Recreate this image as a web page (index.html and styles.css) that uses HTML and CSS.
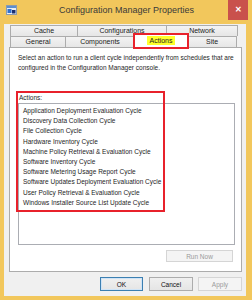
FILE: index.html
```html
<!DOCTYPE html>
<html lang="en">
<head>
  <meta charset="UTF-8">
  <meta name="viewport" content="width=device-width, initial-scale=1.0">
  <title>Configuration Manager Properties</title>
  <link rel="stylesheet" href="styles.css">
</head>
<body>
  <div class="window">
    <div class="titlebar">
      <svg class="app-icon" width="11" height="10" viewBox="0 0 11 10">
        <rect x="0.5" y="0.5" width="10" height="9" fill="#e8eef5" stroke="#8a9bb0"/>
        <rect x="1" y="1" width="9" height="2" fill="#5b8fd0"/>
        <rect x="1.5" y="4" width="4" height="4" fill="#2f6fcf"/>
        <rect x="6" y="5" width="3.5" height="3.5" fill="#1a2f70"/>
      </svg>
      <div class="title">Configuration Manager Properties</div>
      <div class="close">&#x2715;</div>
    </div>

    <div class="dialog">
      <div class="tabs">
        <div class="tabrow">
          <div class="tab w68">Cache</div>
          <div class="tab w90">Configurations</div>
          <div class="tab w72">Network</div>
        </div>
        <div class="tabrow">
          <div class="tab w56">General</div>
          <div class="tab w70">Components</div>
          <div class="tab w54 selected"><span class="marker">Actions</span></div>
          <div class="tab w50">Site</div>
        </div>
      </div>

      <div class="panel">
        <p class="desc">Select an action to run a client cycle independently from schedules that are<br>configured in the Configuration Manager console.</p>

        <div class="label">Actions:</div>
        <ul class="list">
          <li>Application Deployment Evaluation Cycle</li>
          <li>Discovery Data Collection Cycle</li>
          <li>File Collection Cycle</li>
          <li>Hardware Inventory Cycle</li>
          <li>Machine Policy Retrieval &amp; Evaluation Cycle</li>
          <li>Software Inventory Cycle</li>
          <li>Software Metering Usage Report Cycle</li>
          <li>Software Updates Deployment Evaluation Cycle</li>
          <li>User Policy Retrieval &amp; Evaluation Cycle</li>
          <li>Windows Installer Source List Update Cycle</li>
        </ul>

        <button class="btn run" disabled>Run Now</button>

        <!-- annotation drawn over the screenshot -->
        <div class="callout"></div>
      </div>

      <div class="buttons">
        <button class="btn default">OK</button>
        <button class="btn">Cancel</button>
        <button class="btn" disabled>Apply</button>
      </div>
    </div>
  </div>
</body>
</html>
```

FILE: styles.css
```css
body {
  margin: 0;
  font-family: "Liberation Sans", Arial, sans-serif;
  color: #000;
}

.window {
  width: 252px;
  height: 300px;
  box-sizing: border-box;
  padding: 0 6px 4px 4px;
  background: #f2c75c;
  display: flex;
  flex-direction: column;
}

.titlebar {
  height: 24px;
  display: flex;
  align-items: flex-start;
}
.app-icon {
  margin: 5px 0 0 2px;
}
.title {
  flex: 1;
  text-align: center;
  padding-left: 8px;
  font-size: 9px;
  line-height: 20px;
  color: #3a3a3a;
}
.close {
  width: 20px;
  height: 20px;
  margin-right: -2px;
  background: #c9514c;
  color: #fff;
  font-size: 8px;
  font-weight: bold;
  line-height: 20px;
  text-align: center;
}

.dialog {
  flex: 1;
  background: #f0f0f0;
  padding: 1px 4px 5px 5px;
  display: flex;
  flex-direction: column;
}

.tabs {
  margin: 0 2px 0 1px;
}
.tabrow {
  display: flex;
  height: 11px;
}
.tab {
  box-sizing: border-box;
  height: 11px;
  border: 1px solid #acacac;
  border-bottom: none;
  margin-left: -1px;
  background: linear-gradient(#f3f3f3, #e6e6e6);
  font-size: 7px;
  line-height: 10px;
  text-align: center;
  color: #222;
}
.tab:first-child { margin-left: 0; }
.w50 { width: 50px; }
.w54 { width: 54px; }
.w56 { width: 56px; }
.w68 { width: 68px; }
.w70 { width: 70px; }
.w72 { width: 72px; }
.w90 { width: 90px; }

.tab.selected {
  height: 14px;
  margin-top: -2px;
  background: #fff;
  line-height: 12px;
  position: relative;
  z-index: 1;
  outline: 2px solid #e8212b;
  outline-offset: -1px;
}
.marker {
  background: #ffff2a;
  padding: 1px 3px;
}

.panel {
  flex: 1;
  position: relative;
  background: #fff;
  border: 1px solid #acacac;
  padding: 5px 6px 9px 8px;
  display: flex;
  flex-direction: column;
}
.desc {
  margin: 0;
  font-size: 6.5px;
  line-height: 10px;
  white-space: nowrap;
  color: #1e1e1e;
}
.label {
  margin-top: 20px;
  padding-left: 1px;
  font-size: 6.5px;
  line-height: 10px;
  color: #1e1e1e;
}
.list {
  list-style: none;
  margin: 0;
  padding: 2px 0 0 4px;
  height: 142px;
  box-sizing: border-box;
  border: 1px solid #abadb3;
  font-size: 6.5px;
  line-height: 10.2px;
  color: #1e1e1e;
}

.btn {
  box-sizing: border-box;
  width: 44px;
  height: 14px;
  padding: 0;
  border: 1px solid #acacac;
  background: linear-gradient(#f0f0f0, #e5e5e5);
  font-family: inherit;
  font-size: 6.5px;
  color: #111;
}
.btn:disabled {
  background: #f4f4f4;
  border-color: #d5d5d5;
  color: #9a9a9a;
}
.btn.default {
  width: 43px;
  border-color: #3c7fb1;
  box-shadow: inset 0 0 0 1px #cfe4f7;
}
.run {
  align-self: flex-end;
  width: 67px;
  height: 12px;
  margin: 5px 2px 0 0;
}

.buttons {
  display: flex;
  justify-content: flex-end;
  gap: 5px;
  margin-top: 5px;
}
.buttons .default { margin-right: 1px; }

.callout {
  position: absolute;
  left: 6px;
  top: 43px;
  width: 149px;
  height: 121px;
  box-sizing: border-box;
  border: 2px solid #e8212b;
}
```
